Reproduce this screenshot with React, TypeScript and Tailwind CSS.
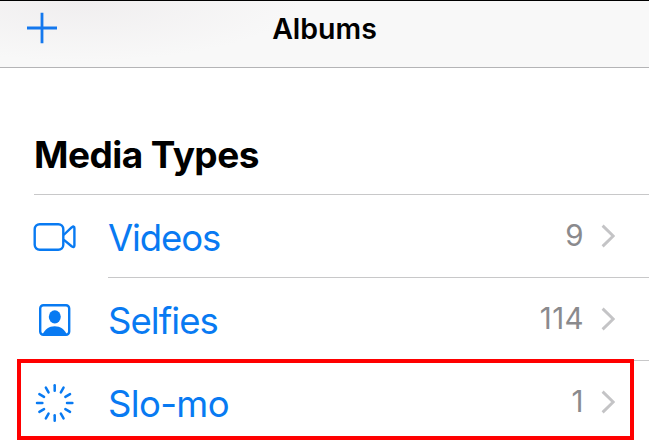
import type { ReactNode } from "react";

type Row = {
  label: string;
  count: number;
  icon: ReactNode;
  labelClass: string;
  highlighted?: boolean;
};

function VideoIcon() {
  return (
    <svg width="44" height="30" viewBox="0 0 44 30" fill="none" stroke="currentColor" strokeWidth="2.4" strokeLinejoin="round">
      <rect x="1.7" y="2.2" width="28.6" height="25.6" rx="5" />
      <path d="M30.6 13 38.6 5.4Q41.4 3.4 41.4 6V23.6Q41.4 26.2 38.6 24.2L30.6 17.6" />
    </svg>
  );
}

function SelfieIcon() {
  return (
    <svg width="44" height="34" viewBox="0 0 44 34" fill="none">
      <rect x="7.2" y="2.2" width="29" height="29.6" rx="3.2" stroke="currentColor" strokeWidth="2.4" />
      <ellipse cx="21.8" cy="13.8" rx="6" ry="6.6" fill="currentColor" />
      <path d="M9.6 31.5C11.5 26.5 16 23.2 21.7 23.2S31.9 26.5 33.8 31.5Z" fill="currentColor" />
    </svg>
  );
}

function SloMoIcon() {
  const angles = Array.from({ length: 12 }, (_, i) => i * 30);
  return (
    <svg width="44" height="40" viewBox="0 0 44 40" stroke="currentColor" strokeWidth="2.5" strokeLinecap="round">
      {angles.map((a) => (
        <path key={a} d="M21.7 2.3v5.4" transform={`rotate(${a} 21.7 20)`} />
      ))}
    </svg>
  );
}

function Chevron() {
  return (
    <svg className="-mt-px" width="14" height="24" viewBox="0 0 14 24" fill="none" stroke="#c4c4c6" strokeWidth="2.9">
      <path d="M1.6 1.6 12.2 12 1.6 22.4" />
    </svg>
  );
}

const rows: Row[] = [
  { label: "Videos", count: 9, icon: <VideoIcon />, labelClass: "tracking-[-1.1px]" },
  { label: "Selfies", count: 114, icon: <SelfieIcon />, labelClass: "tracking-[-0.95px]" },
  { label: "Slo-mo", count: 1, icon: <SloMoIcon />, labelClass: "tracking-[-0.65px]", highlighted: true },
];

function MediaRow({ label, count, icon, labelClass, highlighted }: Row) {
  return (
    <li className="relative flex h-[83px] pl-[33px]">
      <div className="flex w-[75px] shrink-0 items-center text-[#087af2]">{icon}</div>
      <div className="flex flex-1 items-center border-b border-[#c8c8c9] pr-[34px]">
        <span className={`flex-1 pt-[5px] text-[36.5px] leading-none text-[#087af2] ${labelClass}`}>{label}</span>
        <span className="mr-[17px] text-[29.5px] leading-none tracking-[0.4px] text-[#8a8a8d]">{count}</span>
        <Chevron />
      </div>
      {highlighted && (
        <div className="absolute -top-[2px] left-[17px] h-[81px] w-[617px] border-4 border-[#ff0000]" />
      )}
    </li>
  );
}

export default function App() {
  return (
    <div className="h-[443px] w-[649px] overflow-hidden bg-white font-['Inter','Liberation_Sans',sans-serif] text-black">
      <header className="grid h-[68px] grid-cols-[1fr_auto_1fr] items-center border-t border-b border-t-black border-b-[#b4b4b6] bg-[#f8f8f8] bg-[radial-gradient(ellipse_220px_60px_at_80px_0px,#f0eeef,#f8f8f8)]">
        <button aria-label="Add album" className="-mt-[13px] ml-[26px] w-8 text-[#1478ee]">
          <svg width="32" height="32" viewBox="0 0 32 32" stroke="currentColor" strokeWidth="2.8">
            <path d="M16 .7v30.6M1 16h30" />
          </svg>
        </button>
        <h1 className="-mt-[10px] text-[28.5px] leading-none font-semibold">Albums</h1>
      </header>
      <main>
        <div className="ml-[34px] flex h-[127px] items-end border-b border-[#c8c8c9] pb-[21px]">
          <h2 className="text-[37px] leading-none font-bold tracking-[-0.55px]">Media Types</h2>
        </div>
        <ul>
          {rows.map((row) => (
            <MediaRow key={row.label} {...row} />
          ))}
        </ul>
      </main>
    </div>
  );
}
